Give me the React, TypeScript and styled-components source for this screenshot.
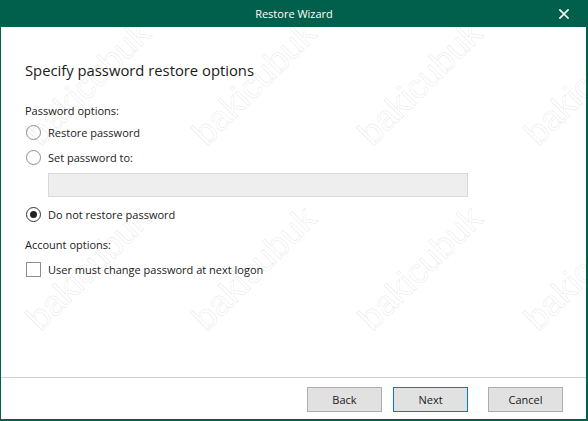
import React from 'react';
import styled, { createGlobalStyle } from 'styled-components';

const GlobalStyle = createGlobalStyle`
  html, body {
    margin: 0;
    padding: 0;
    background: #fff;
  }
  body {
    font-family: "Open Sans", "Noto Sans", sans-serif;
    color: #1a1a1a;
  }
`;

const Frame = styled.div`
  position: relative;
  width: 588px;
  height: 421px;
  display: flex;
  flex-direction: column;
  overflow: hidden;
  background: #fff;
`;

const TitleBar = styled.div`
  height: 27px;
  flex: none;
  background: #00604b;
  color: #fff;
  display: grid;
  grid-template-columns: 1fr auto 1fr;
  align-items: center;
  font-size: 11px;
`;

const Title = styled.span`
  grid-column: 2;
`;

const CloseButton = styled.div`
  grid-column: 3;
  justify-self: end;
  display: flex;
  padding-right: 19px;
`;

const Body = styled.div`
  flex: 1;
  display: flex;
  flex-direction: column;
  border: solid #00604b;
  border-width: 0 2px 2px 1px;
`;

const Content = styled.div`
  flex: 1;
  padding-left: 24px;
  display: flex;
  flex-direction: column;
  align-items: flex-start;
`;

const Heading = styled.h1`
  margin: 33px 0 0;
  font-size: 14.8px;
  line-height: 20px;
  font-weight: 400;
  color: #1a1a1a;
`;

const SectionLabel = styled.div<{ $top: number }>`
  margin-top: ${(p) => p.$top}px;
  font-size: 11px;
  line-height: 15px;
`;

const OptionRow = styled.label<{ $top: number }>`
  margin-top: ${(p) => p.$top}px;
  height: 20px;
  display: flex;
  align-items: center;
  gap: 7px;
  padding-left: 1px;
  font-size: 11px;
`;

const RadioCircle = styled.span<{ $checked?: boolean }>`
  width: 15px;
  height: 15px;
  box-sizing: border-box;
  border-radius: 50%;
  border: 1px solid ${(p) => (p.$checked ? '#333' : '#8c8c8c')};
  display: flex;
  align-items: center;
  justify-content: center;

  &::after {
    content: '';
    width: 7px;
    height: 7px;
    border-radius: 50%;
    background: ${(p) => (p.$checked ? '#222' : 'transparent')};
  }
`;

const CheckBox = styled.span`
  width: 15px;
  height: 15px;
  box-sizing: border-box;
  border: 1px solid #8c8c8c;
  background: #fff;
`;

const TextField = styled.div`
  margin: 6px 0 0 23px;
  width: 420px;
  height: 24px;
  box-sizing: border-box;
  background: #eeeeee;
  border: 1px solid #d9d9d9;
`;

const Footer = styled.div`
  height: 42px;
  box-sizing: border-box;
  border-top: 1px solid #d0d0d0;
  padding: 9px 23px 0 0;
  display: flex;
  justify-content: flex-end;
  align-items: flex-start;
`;

const Button = styled.button<{ $primary?: boolean; $gap?: number }>`
  margin-left: ${(p) => p.$gap ?? 0}px;
  width: 75px;
  height: 25px;
  box-sizing: border-box;
  background: #e1e1e1;
  border: 1px solid ${(p) => (p.$primary ? '#0078d7' : '#adadad')};
  font-family: "Open Sans", "Noto Sans", sans-serif;
  font-size: 11px;
  color: #1a1a1a;
  padding: 0;
`;

// watermark overlay, lies over the whole window
const Watermark = styled.div`
  position: absolute;
  inset: 0;
  pointer-events: none;
  overflow: hidden;
`;

const Mark = styled.span<{ $x: number; $y: number }>`
  position: absolute;
  left: ${(p) => p.$x}px;
  top: ${(p) => p.$y - 18}px;
  font-family: "Liberation Sans", Arial, sans-serif;
  font-size: 35px;
  line-height: 1;
  white-space: nowrap;
  color: transparent;
  -webkit-text-stroke: 1px rgba(0, 0, 0, 0.075);
  transform-origin: 0 50%;
  transform: rotate(-45deg);
`;

const marks: { x: number; y: number }[] = [];
[139, 324].forEach((y) => {
  [32, 198, 364, 530].forEach((x) => marks.push({ x, y }));
});

const App: React.FC = () => {
  return (
    <>
      <GlobalStyle />
      <Frame>
        <TitleBar>
          <Title>Restore Wizard</Title>
          <CloseButton>
            <svg width="10" height="10" viewBox="0 0 10 10">
              <path d="M1 1 L9 9 M9 1 L1 9" stroke="#fff" strokeWidth="1.7" strokeLinecap="square" />
            </svg>
          </CloseButton>
        </TitleBar>
        <Body>
          <Content>
            <Heading>Specify password restore options</Heading>

            <SectionLabel $top={23}>Password options:</SectionLabel>
            <OptionRow $top={4}>
              <RadioCircle />
              Restore password
            </OptionRow>
            <OptionRow $top={5}>
              <RadioCircle />
              Set password to:
            </OptionRow>
            <TextField />
            <OptionRow $top={7}>
              <RadioCircle $checked />
              Do not restore password
            </OptionRow>

            <SectionLabel $top={13}>Account options:</SectionLabel>
            <OptionRow $top={7}>
              <CheckBox />
              User must change password at next logon
            </OptionRow>
          </Content>
          <Footer>
            <Button>Back</Button>
            <Button $primary $gap={11}>Next</Button>
            <Button $gap={20}>Cancel</Button>
          </Footer>
        </Body>
        <Watermark>
          {marks.map((m, i) => (
            <Mark key={i} $x={m.x} $y={m.y}>
              bakicubuk
            </Mark>
          ))}
        </Watermark>
      </Frame>
    </>
  );
};

export default App;
